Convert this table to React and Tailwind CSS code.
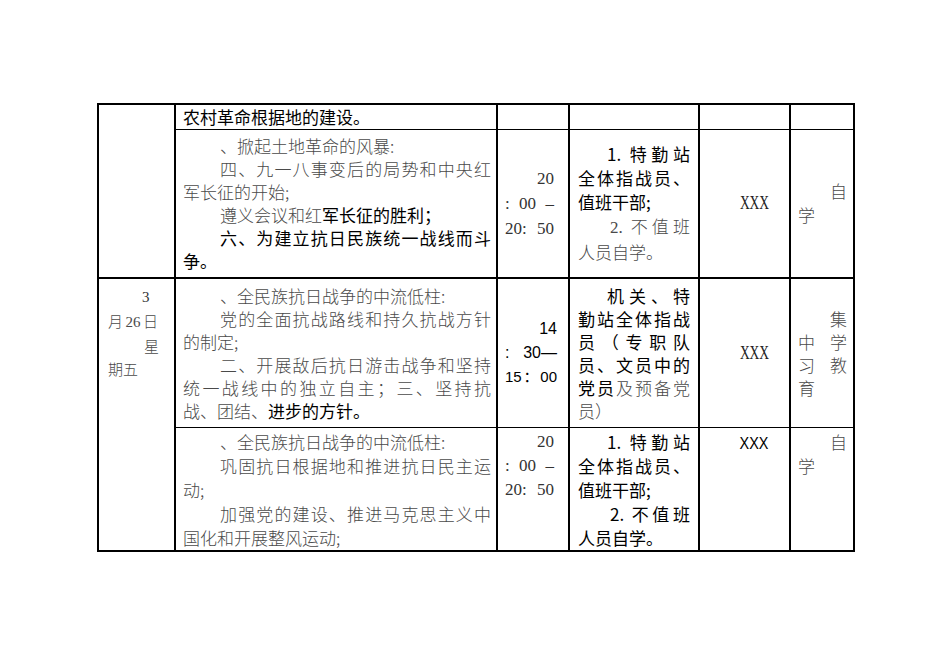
import React from "react";

const J = "text-justify [text-align-last:justify]";

const Lt = ({ children }) => (
  <span className="font-light text-[#4a4a4a]">{children}</span>
);

const Serif = ({ children }) => (
  <span className="font-['Liberation_Serif','Noto_Sans_CJK_SC',serif]">{children}</span>
);

const XXX = ({ serif }) => (
  <span
    className={
      serif
        ? "inline-block scale-x-75 font-['Liberation_Serif',serif] text-[18px] text-[#222]"
        : "inline-block scale-x-90 font-['Liberation_Sans',sans-serif] text-[16px]"
    }
  >
    XXX
  </span>
);

const cell = "border-x-2 border-y border-black p-0";

const App = () => {
  return (
    <div className="w-[950px] h-[672px] bg-white pt-[103px] pl-[97px] font-['Noto_Sans_CJK_SC',sans-serif] text-[17px] text-black">
      <table className="table-fixed border-collapse w-[756px]">
        <colgroup>
          <col className="w-[77px]" />
          <col className="w-[322px]" />
          <col className="w-[72px]" />
          <col className="w-[130px]" />
          <col className="w-[91px]" />
          <col className="w-[64px]" />
        </colgroup>
        <tbody>
          {/* row 0 */}
          <tr className="h-[25px]">
            <td rowSpan={2} className={`${cell} border-t-2 border-b-2`}></td>
            <td className={`${cell} border-t-2 pl-[7px] leading-[22px]`}>
              农村革命根据地的建设。
            </td>
            <td className={`${cell} border-t-2`}></td>
            <td className={`${cell} border-t-2`}></td>
            <td className={`${cell} border-t-2`}></td>
            <td className={`${cell} border-t-2`}></td>
          </tr>

          {/* row 1 */}
          <tr className="h-[149px]">
            <td className={`${cell} border-b-2 align-middle pl-[7px] pr-[5px] leading-[23px]`}>
              <div className="pl-[37px]"><Lt>、掀起土地革命的风暴:</Lt></div>
              <div className={`pl-[37px] ${J}`}><Lt>四、九一八事变后的局势和中央红</Lt></div>
              <div><Lt>军长征的开始;</Lt></div>
              <div className="pl-[37px]"><Lt>遵义会议和红</Lt>军长征的胜利；</div>
              <div className={`pl-[37px] ${J}`}>六、为建立抗日民族统一战线而斗</div>
              <div>争。</div>
            </td>
            <td className={`${cell} border-b-2 align-middle pl-[7px] pr-[14px] leading-[25px] font-['Liberation_Serif',serif] text-[#333]`}>
              <div className="text-right">20</div>
              <div className={J}>: 00 –</div>
              <div className={J}>20: 50</div>
            </td>
            <td className={`${cell} border-b-2 align-middle pl-[8px] pr-[8px] leading-[24px]`}>
              <div className={`pl-[29px] ${J}`}>1. 特勤站</div>
              <div className={J}>全体指战员、</div>
              <div>值班干部;</div>
              <div className={`pl-[32px] ${J}`}><Lt><Serif>2.</Serif> 不值班</Lt></div>
              <div><Lt>人员自学。</Lt></div>
            </td>
            <td className={`${cell} border-b-2 align-middle pl-[20px] text-center`}>
              <XXX serif />
            </td>
            <td className={`${cell} border-b-2 align-middle pl-[7px] pr-[6px] leading-[24px]`}>
              <div className="text-right"><Lt>自</Lt></div>
              <div><Lt>学</Lt></div>
            </td>
          </tr>

          {/* row 2 */}
          <tr className="h-[149px]">
            <td rowSpan={2} className={`${cell} border-b-2 align-top pt-[5px] pl-[9px] pr-[16px] leading-[23px] text-[15px] text-[#333]`}>
              <div className="pl-[34px]"><Serif>3</Serif></div>
              <div className={J}><Lt>月<Serif>26</Serif>日</Lt></div>
              <div className="pl-[36px]"><Lt>星</Lt></div>
              <div><Lt>期五</Lt></div>
            </td>
            <td className={`${cell} align-middle pl-[7px] pr-[5px] leading-[23px]`}>
              <div className="pl-[37px]"><Lt>、全民族抗日战争的中流低柱:</Lt></div>
              <div className={`pl-[37px] ${J}`}><Lt>党的全面抗战路线和持久抗战方针</Lt></div>
              <div><Lt>的制定;</Lt></div>
              <div className={`pl-[37px] ${J}`}><Lt>二、开展敌后抗日游击战争和坚持</Lt></div>
              <div className={J}><Lt>统一战线中的独立自主；三、坚持抗</Lt></div>
              <div><Lt>战、团结、</Lt>进步的方针。</div>
            </td>
            <td className={`${cell} align-middle pl-[7px] pr-[11px] leading-[24px] text-[15px] font-['Liberation_Sans','Noto_Sans_CJK_SC',sans-serif]`}>
              <div className="text-right text-[16px]">14</div>
              <div className={`${J} text-[16px]`}>: 30—</div>
              <div className={`${J} whitespace-nowrap`}>15：00</div>
            </td>
            <td className={`${cell} align-middle pl-[8px] pr-[8px] leading-[23px]`}>
              <div className={`pl-[29px] ${J}`}>机关、特</div>
              <div className={J}>勤站全体指战</div>
              <div className={J}>员（专职队</div>
              <div className={J}>员、文员中的</div>
              <div className={J}>党员<Lt>及预备党</Lt></div>
              <div><Lt>员）</Lt></div>
            </td>
            <td className={`${cell} align-middle pl-[20px] text-center`}>
              <XXX serif />
            </td>
            <td className={`${cell} align-middle pl-[7px] pr-[6px] leading-[23px]`}>
              <div className="text-right"><Lt>集</Lt></div>
              <div className="flex justify-between"><Lt>中</Lt><Lt>学</Lt></div>
              <div className="flex justify-between"><Lt>习</Lt><Lt>教</Lt></div>
              <div><Lt>育</Lt></div>
            </td>
          </tr>

          {/* row 3 */}
          <tr className="h-[122px]">
            <td className={`${cell} border-b-2 align-top pt-[2px] pl-[7px] pr-[5px] leading-[24px]`}>
              <div className="pl-[37px]"><Lt>、全民族抗日战争的中流低柱:</Lt></div>
              <div className={`pl-[37px] ${J}`}><Lt>巩固抗日根据地和推进抗日民主运</Lt></div>
              <div><Lt>动;</Lt></div>
              <div className={`pl-[37px] ${J}`}><Lt>加强党的建设、推进马克思主义中</Lt></div>
              <div><Lt>国化和开展整风运动;</Lt></div>
            </td>
            <td className={`${cell} border-b-2 align-top pt-[2px] pl-[7px] pr-[14px] leading-[24px] font-['Liberation_Serif',serif] text-[#333]`}>
              <div className="text-right">20</div>
              <div className={J}>: 00 –</div>
              <div className={J}>20: 50</div>
            </td>
            <td className={`${cell} border-b-2 align-top pt-[2px] pl-[8px] pr-[8px] leading-[24px]`}>
              <div className={`pl-[29px] ${J}`}>1. 特勤站</div>
              <div className={J}>全体指战员、</div>
              <div>值班干部;</div>
              <div className={`pl-[32px] ${J}`}>2. 不值班</div>
              <div>人员自学。</div>
            </td>
            <td className={`${cell} border-b-2 align-top pt-[2px] pl-[20px] text-center leading-[24px]`}>
              <XXX />
            </td>
            <td className={`${cell} border-b-2 align-top pt-[2px] pl-[7px] pr-[6px] leading-[24px]`}>
              <div className="text-right"><Lt>自</Lt></div>
              <div><Lt>学</Lt></div>
            </td>
          </tr>
        </tbody>
      </table>
    </div>
  );
};

export default App;
